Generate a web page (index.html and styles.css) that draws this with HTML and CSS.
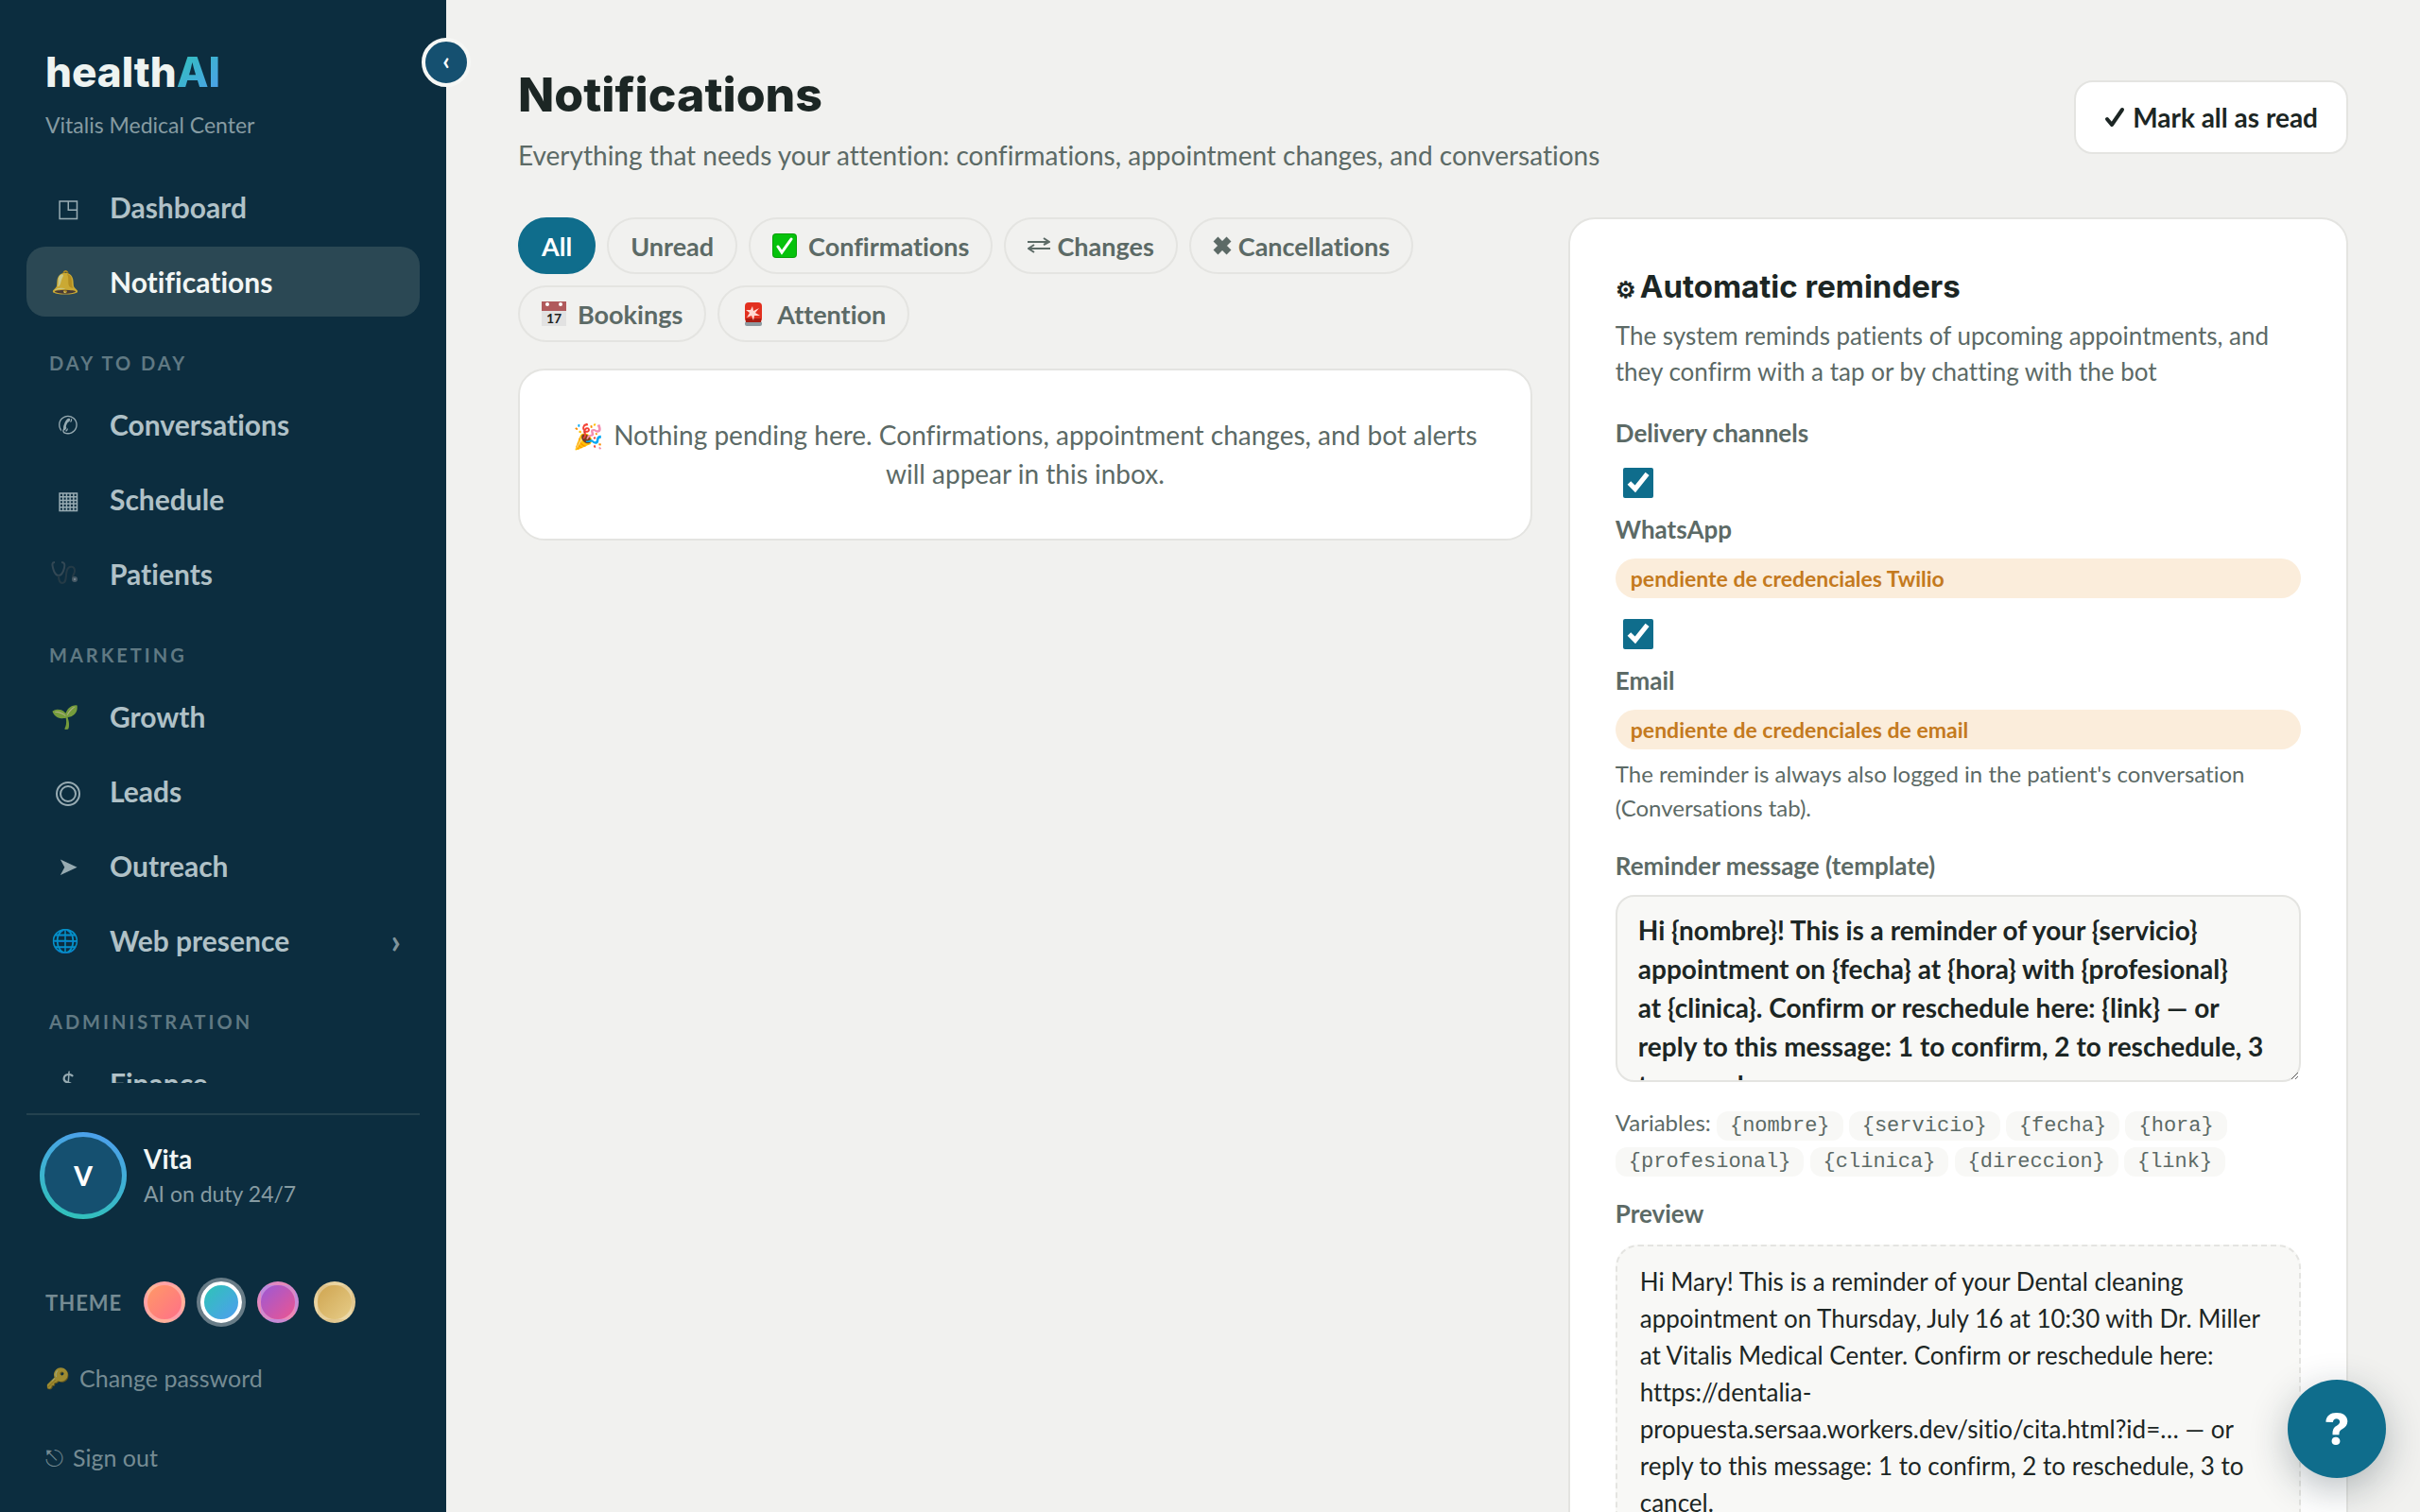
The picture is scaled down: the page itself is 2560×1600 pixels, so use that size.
FILE: index.html
```html
<!DOCTYPE html>
<html lang="en">
<head>
  <meta charset="UTF-8" />
  <meta name="viewport" content="width=device-width, initial-scale=1.0" />
  <title>Notifications - healthAI</title>
  <link rel="stylesheet" href="styles.css">
</head>
<body>
  <aside class="sidebar">
    <button class="collapse" aria-label="Collapse menu">‹</button>
    <div class="brand">
      <div class="logo">health<span>AI</span></div>
      <div class="clinic">Vitalis Medical Center</div>
    </div>

    <nav class="nav">
      <a class="nav-item" href="#"><span class="ico">◳</span>Dashboard</a>
      <a class="nav-item active" href="#"><span class="ico emoji">🔔</span>Notifications</a>
      <div class="nav-label">Day to day</div>
      <a class="nav-item" href="#"><span class="ico">✆</span>Conversations</a>
      <a class="nav-item" href="#"><span class="ico">▦</span>Schedule</a>
      <a class="nav-item" href="#">
        <span class="ico emoji">
          <svg width="28" height="28" viewBox="0 0 28 28" fill="none" stroke="#41525d" stroke-width="2">
            <path d="M4 2C1 2 1 4 2 8c1 4 3 8 6 8s5-4 6-8c1-4 0-6-3-6" />
            <path d="M8 16c0 5 1 8 4 8 5 0 3-8 5-14 2-5 8-4 8 1 0 4-3 5-2 8" stroke="#2d3f49" />
            <circle cx="25" cy="20" r="2" fill="#a9b4bb" stroke="#5b6a74" />
          </svg>
        </span>Patients</a>
      <div class="nav-label">Marketing</div>
      <a class="nav-item" href="#"><span class="ico emoji">🌱</span>Growth</a>
      <a class="nav-item" href="#">
        <span class="ico">
          <svg width="26" height="26" viewBox="0 0 26 26" fill="none" stroke="currentColor" stroke-width="2">
            <circle cx="13" cy="13" r="12" />
            <circle cx="13" cy="13" r="8" />
          </svg>
        </span>Leads</a>
      <a class="nav-item" href="#"><span class="ico">➤</span>Outreach</a>
      <a class="nav-item" href="#"><span class="ico emoji">🌐</span>Web presence<span class="chev">›</span></a>
      <div class="nav-label">Administration</div>
      <a class="nav-item" href="#"><span class="ico">$</span>Finance</a>
    </nav>

    <div class="side-foot">
      <div class="agent">
        <div class="avatar"><span>V</span></div>
        <div>
          <div class="agent-name">Vita</div>
          <div class="agent-sub">AI on duty 24/7</div>
        </div>
      </div>
      <div class="themes">
        <span class="themes-label">Theme</span>
        <button class="swatch coral" aria-label="Coral"></button>
        <button class="swatch ocean on" aria-label="Ocean"></button>
        <button class="swatch violet" aria-label="Violet"></button>
        <button class="swatch gold" aria-label="Gold"></button>
      </div>
      <a class="foot-link" href="#"><span class="key">🔑</span>Change password</a>
      <a class="foot-link" href="#"><span class="out">⎋</span>Sign out</a>
    </div>
  </aside>

  <main class="main">
    <header class="page-head">
      <div>
        <h1>Notifications</h1>
        <p class="sub">Everything that needs your attention: confirmations, appointment changes, and conversations</p>
      </div>
      <button class="btn"><svg width="22" height="24" viewBox="0 0 22 24" fill="none" stroke="currentColor" stroke-width="4" stroke-linecap="round" stroke-linejoin="round"><path d="M3 14l5 6L19 4" /></svg>Mark all as read</button>
    </header>

    <div class="columns">
      <section>
        <div class="chips">
          <button class="chip on">All</button>
          <button class="chip">Unread</button>
          <button class="chip"><svg class="pic" viewBox="0 0 26 26"><rect width="26" height="26" rx="4" fill="#0a9f0a" /><rect x="1" y="1" width="24" height="24" rx="3" fill="#06c20c" /><path d="M6 14l4 6L20 6" fill="none" stroke="#fff" stroke-width="3" stroke-linecap="round" /></svg>Confirmations</button>
          <button class="chip"><svg class="glyph" viewBox="0 0 24 18" fill="none" stroke="currentColor" stroke-width="2"><path d="M0 5h22M17 1l6 4-6 3M24 12H2M7 8l-6 4 6 4" /></svg>Changes</button>
          <button class="chip"><svg class="cross" viewBox="0 0 20 20" stroke="currentColor" stroke-width="7"><path d="M3 3l14 14M17 3L3 17" /></svg>Cancellations</button>
          <button class="chip"><svg class="pic" viewBox="0 0 26 26"><path d="M0 0h26v26H0z" fill="#e2e2e2" /><path d="M0 0h26v10H0z" fill="#b05a5c" /><circle cx="6" cy="3" r="2" fill="#fff" /><circle cx="20" cy="3" r="2" fill="#fff" /><text x="13" y="23" text-anchor="middle" font-size="14" fill="#222">17</text></svg>Bookings</button>
          <button class="chip"><svg class="pic" viewBox="0 0 26 26"><rect x="4" y="21" width="18" height="5" rx="2" fill="#8d9aa0" /><rect x="4" y="1" width="18" height="21" rx="4" fill="#e2301f" /><path d="M5 18h16v4H5z" fill="#a81c12" /><path d="M12 5l1 5 6-3-4 5 5 3-6 0-1 5-2-5-5 2 3-5-4-3 5 0z" fill="#ffd9d2" /></svg>Attention</button>
        </div>
        <div class="card empty"><span class="party">🎉</span>Nothing pending here. Confirmations, appointment changes, and bot alerts will appear in this inbox.</div>
      </section>

      <section class="card settings">
        <h2><span class="gear">⚙</span>Automatic reminders</h2>
        <p class="desc">The system reminds patients of upcoming appointments, and they confirm with a tap or by chatting with the bot</p>

        <div class="field-label">Delivery channels</div>
        <input type="checkbox" id="chWhatsapp" checked>
        <label class="field-label" for="chWhatsapp">WhatsApp</label>
        <div class="badge">pendiente de credenciales Twilio</div>
        <input type="checkbox" id="chEmail" checked>
        <label class="field-label" for="chEmail">Email</label>
        <div class="badge">pendiente de credenciales de email</div>
        <p class="hint">The reminder is always also logged in the patient's conversation (Conversations tab).</p>

        <label class="field-label" for="tpl">Reminder message (template)</label>
        <textarea id="tpl">Hi {nombre}! This is a reminder of your {servicio} appointment on {fecha} at {hora} with {profesional}
at {clinica}. Confirm or reschedule here: {link} — or reply to this message: 1 to confirm, 2 to reschedule, 3 to cancel.</textarea>
        <p class="vars">Variables: <code>{nombre}</code> <code>{servicio}</code> <code>{fecha}</code> <code>{hora}</code> <code>{profesional}</code> <code>{clinica}</code> <code>{direccion}</code> <code>{link}</code></p>

        <div class="field-label">Preview</div>
        <div class="preview">Hi Mary! This is a reminder of your Dental cleaning appointment on Thursday, July 16 at 10:30 with Dr. Miller at Vitalis Medical Center. Confirm or reschedule here: https://dentalia-propuesta.sersaa.workers.dev/sitio/cita.html?id=… — or reply to this message: 1 to confirm, 2 to reschedule, 3 to cancel.</div>
      </section>
    </div>
  </main>

  <button class="help" aria-label="Help">?</button>
</body>
</html>
```
FILE: styles.css
```css
:root {
  --side: #0c2d3f;
  --bg: #f1f1ef;
  --ink: #1c2624;
  --muted: #5c6a66;
  --line: #e4e4e1;
  --accent: #0f6d8c;
  --grad: linear-gradient(135deg, #2ec4b6, #4f9df0);
}
* {
  box-sizing: border-box;
}
body {
  margin: 0;
  height: 100vh;
  display: flex;
  overflow: hidden;
  background: var(--bg);
  color: var(--ink);
  font-family: Lato, "Open Sans", sans-serif;
  font-size: 28px;
  font-variant-ligatures: none;
}
button, textarea {
  font-family: inherit;
  font-variant-ligatures: none;
}
button {
  cursor: pointer;
}
h1, h2, p {
  margin: 0;
}
a {
  color: inherit;
  text-decoration: none;
}

/* sidebar */
.sidebar {
  position: relative;
  flex: 0 0 472px;
  display: flex;
  flex-direction: column;
  padding: 48px 28px 36px;
  background: var(--side);
}
.collapse {
  position: absolute;
  top: 40px;
  right: -26px;
  width: 52px;
  height: 52px;
  padding: 0 0 4px;
  border: 4px solid #f6f7f5;
  border-radius: 50%;
  background: #155070;
  color: #fff;
  font-size: 26px;
  font-weight: 700;
  line-height: 36px;
}
.brand {
  padding: 0 20px 34px;
}
.logo {
  font-family: Inter, sans-serif;
  font-size: 44px;
  font-weight: 800;
  line-height: 56px;
  color: #eef3f1;
}
.logo span {
  background: var(--grad);
  -webkit-background-clip: text;
  background-clip: text;
  color: transparent;
}
.clinic {
  margin-top: 12px;
  font-size: 23px;
  line-height: 32px;
  color: #869ba2;
}
.nav {
  flex: 1;
  min-height: 0;
  display: flex;
  flex-direction: column;
  gap: 5px;
  overflow: hidden;
}
.nav-item {
  flex: none;
  display: flex;
  align-items: center;
  height: 74px;
  padding: 0 20px 0 26px;
  border-radius: 20px;
  font-size: 30px;
  font-weight: 700;
  color: #b0c1c7;
}
.nav-item.active {
  background: #2b4854;
  color: #f2f6f5;
}
.ico {
  width: 36px;
  margin-right: 26px;
  font-size: 26px;
  font-weight: 400;
  text-align: center;
  opacity: .85;
}
.ico svg {
  display: inline-block;
  vertical-align: middle;
}
.emoji {
  display: flex;
  font-size: 24px;
  opacity: .75;
}
.chev {
  margin-left: auto;
  font-size: 36px;
  color: #7f949c;
}
.nav-label {
  flex: none;
  padding: 32px 24px 11px;
  font-size: 20px;
  font-weight: 700;
  line-height: 24px;
  letter-spacing: 3px;
  text-transform: uppercase;
  color: #607983;
}
.side-foot {
  margin-top: 32px;
  border-top: 2px solid #24424f;
}
.agent {
  display: flex;
  align-items: center;
  gap: 18px;
  padding: 18px 14px 0;
}
.avatar {
  width: 92px;
  height: 92px;
  padding: 5px;
  border-radius: 50%;
  background: linear-gradient(15deg, #2ec4b6, #4f9df0);
}
.avatar span {
  display: flex;
  align-items: center;
  justify-content: center;
  height: 100%;
  border-radius: 50%;
  background: #155070;
  color: #fff;
  font-weight: 900;
}
.agent-name {
  font-weight: 700;
  line-height: 38px;
  color: #f2f6f5;
}
.agent-sub {
  font-size: 23px;
  line-height: 36px;
  color: #869ba2;
}
.themes {
  display: flex;
  align-items: center;
  gap: 16px;
  padding: 66px 20px 16px;
}
.themes-label {
  width: 88px;
  font-size: 22px;
  font-weight: 700;
  letter-spacing: 1px;
  text-transform: uppercase;
  color: #758b93;
}
.swatch {
  width: 44px;
  height: 44px;
  padding: 0;
  border: 4px solid rgba(255, 255, 255, .3);
  border-radius: 50%;
}
.swatch.on {
  border-color: #fff;
  box-shadow: 0 0 0 4px #687c87;
}
.coral { background: linear-gradient(135deg, #ff9966, #ff7088); }
.ocean { background: var(--grad); }
.violet { background: linear-gradient(135deg, #9b59d6, #ec5590); }
.gold { background: linear-gradient(135deg, #cfa550, #e6cc88); }
.foot-link {
  display: flex;
  align-items: center;
  height: 84px;
  padding: 0 20px;
  font-size: 25px;
  line-height: 34px;
  color: #758b93;
}
.foot-link + .foot-link {
  margin-bottom: -20px;
}
.key {
  width: 36px;
  font-size: 21px;
  opacity: .6;
}
.out {
  width: 29px;
  font-size: 24px;
}

/* page */
.main {
  flex: 1;
  min-width: 0;
  padding: 65px 76px 80px;
  overflow: auto;
  scrollbar-width: none;
}
.page-head {
  display: flex;
  justify-content: space-between;
  align-items: center;
  margin-bottom: 47px;
}
h1, h2 {
  font-family: Inter, sans-serif;
}
h1 {
  font-size: 50px;
  font-weight: 800;
  line-height: 70px;
}
.sub {
  margin-top: 10px;
  line-height: 38px;
  color: var(--muted);
}
.btn {
  display: flex;
  align-items: center;
  gap: 8px;
  height: 78px;
  padding: 0 30px;
  border: 2px solid var(--line);
  border-radius: 20px;
  background: #fff;
  color: var(--ink);
  font-size: 28px;
  font-weight: 700;
}
.columns {
  display: grid;
  grid-template-columns: 1.3fr 1fr;
  gap: 38px;
  align-items: start;
}
.chips {
  display: flex;
  flex-wrap: wrap;
  gap: 12px;
  margin-bottom: 28px;
}
.chip {
  display: flex;
  align-items: center;
  height: 60px;
  padding: 0 23px;
  border: 2px solid var(--line);
  border-radius: 30px;
  background: none;
  color: var(--muted);
  font-size: 27px;
  font-weight: 700;
}
.chip.on {
  border-color: var(--accent);
  background: var(--accent);
  color: #fff;
}
.pic {
  width: 26px;
  height: 26px;
  margin-right: 12px;
}
.glyph {
  width: 24px;
  height: 18px;
  margin-right: 7px;
}
.cross {
  width: 20px;
  height: 20px;
  margin-right: 7px;
}
.card {
  border: 2px solid var(--line);
  border-radius: 28px;
  background: #fff;
}
.empty {
  padding: 48px;
  line-height: 41px;
  text-align: center;
  color: var(--muted);
}
.party {
  margin-right: 11px;
  font-size: 26px;
  line-height: 1;
}
.settings {
  padding: 48px;
}
h2 {
  font-size: 33px;
  font-weight: 700;
  line-height: 46px;
}
.gear {
  margin-right: 4px;
  font-size: 24px;
}
.desc {
  margin: 6px 0 25px;
  font-size: 26px;
  line-height: 38px;
  color: var(--muted);
}
.field-label {
  display: block;
  font-size: 26px;
  font-weight: 700;
  line-height: 42px;
  color: var(--muted);
}
input[type="checkbox"] {
  display: block;
  width: 32px;
  height: 32px;
  margin: 16px 8px 12px;
  accent-color: var(--accent);
}
.badge {
  margin: 10px 0 22px;
  padding: 0 16px;
  border-radius: 21px;
  background: #fbeddb;
  color: #c47a1e;
  font-size: 23px;
  font-weight: 700;
  line-height: 42px;
}
.hint {
  margin: -14px 0 22px;
  font-size: 24px;
  line-height: 36px;
  color: var(--muted);
}
textarea {
  display: block;
  width: 100%;
  height: 198px;
  margin: 10px 0 24px;
  padding: 15px 22px;
  border: 2px solid var(--line);
  border-radius: 20px;
  background: #f8f8f6;
  color: var(--ink);
  font-size: 28px;
  font-weight: 700;
  line-height: 41px;
  overflow: hidden;
}
.vars {
  margin-bottom: 18px;
  font-size: 24px;
  line-height: 38px;
  color: var(--muted);
}
code {
  padding: 3px 14px;
  border-radius: 12px;
  background: #f8f8f6;
  font-family: "Liberation Mono", monospace;
  font-size: 22px;
  line-height: 1;
}
.preview {
  margin-top: 12px;
  padding: 18px 24px;
  border: 2px dashed var(--line);
  border-radius: 24px;
  background: #f8f8f6;
  font-size: 26px;
  line-height: 39px;
}
.help {
  position: fixed;
  right: 36px;
  bottom: 36px;
  width: 104px;
  height: 104px;
  border: none;
  border-radius: 50%;
  background: var(--accent);
  color: #fff;
  font-family: Inter, sans-serif;
  font-size: 46px;
  font-weight: 800;
  box-shadow: 0 12px 40px rgba(20, 40, 50, .3);
}
```
